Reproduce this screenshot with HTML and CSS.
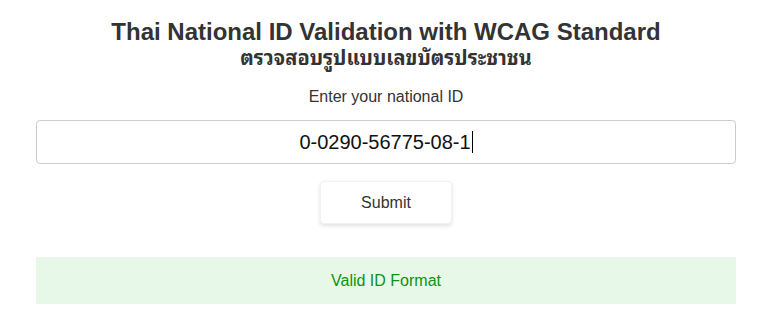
FILE: index.html
```html
<!DOCTYPE html>
<html lang="th">
<head>
<meta charset="utf-8">
<title>Thai National ID Validation</title>
<link rel="stylesheet" href="styles.css">
</head>
<body>
<main class="container">
  <h1 class="title">Thai National ID Validation with WCAG Standard</h1>
  <h2 class="subtitle">ตรวจสอบรูปแบบเลขบัตรประชาชน</h2>
  <label class="label" for="nid">Enter your national ID</label>
  <div class="field"><span class="value">0-0290-56775-08-1</span><span class="caret"></span></div>
  <button class="submit" type="button">Submit</button>
  <div class="result" role="status">Valid ID Format</div>
</main>
</body>
</html>
```
FILE: styles.css
```css
html, body {
  margin: 0;
  padding: 0;
  background: #ffffff;
}
body {
  padding-right: 3px;
  font-family: "Liberation Sans", Arial, "Noto Sans Thai Looped", "Loma", "Garuda", "Tlwg Typo", "Noto Serif Thai", "Noto Sans Thai", sans-serif;
  color: #333333;
}
.container {
  width: 700px;
  margin: 0 auto;
  padding-top: 18px;
  display: flex;
  flex-direction: column;
  align-items: center;
}
.title {
  margin: 0;
  font-size: 24px;
  font-weight: bold;
  line-height: 28px;
  color: #333333;
}
.subtitle {
  margin: 0;
  font-size: 20px;
  font-weight: bold;
  line-height: 24px;
  color: #333333;
}
.label {
  margin-top: 17px;
  font-size: 16px;
  line-height: 20px;
  color: #333333;
}
.field {
  box-sizing: border-box;
  margin-top: 13px;
  width: 700px;
  height: 44px;
  border: 1px solid #cccccc;
  border-radius: 4px;
  display: flex;
  justify-content: center;
  align-items: center;
  font-size: 20px;
  color: #111111;
}
.caret {
  display: inline-block;
  width: 1px;
  height: 22px;
  background: #000000;
  margin-left: 1px;
}
.submit {
  margin-top: 17px;
  width: 132px;
  height: 43px;
  border: 1px solid #f2f2f2;
  border-radius: 4px;
  background: #ffffff;
  box-shadow: 0 2px 4px rgba(0, 0, 0, 0.12);
  font-family: inherit;
  font-size: 16px;
  color: #333333;
}
.result {
  box-sizing: border-box;
  margin-top: 33px;
  width: 700px;
  height: 47px;
  background: #e8f8e8;
  color: #119111;
  font-size: 16px;
  display: flex;
  justify-content: center;
  align-items: center;
}
```
